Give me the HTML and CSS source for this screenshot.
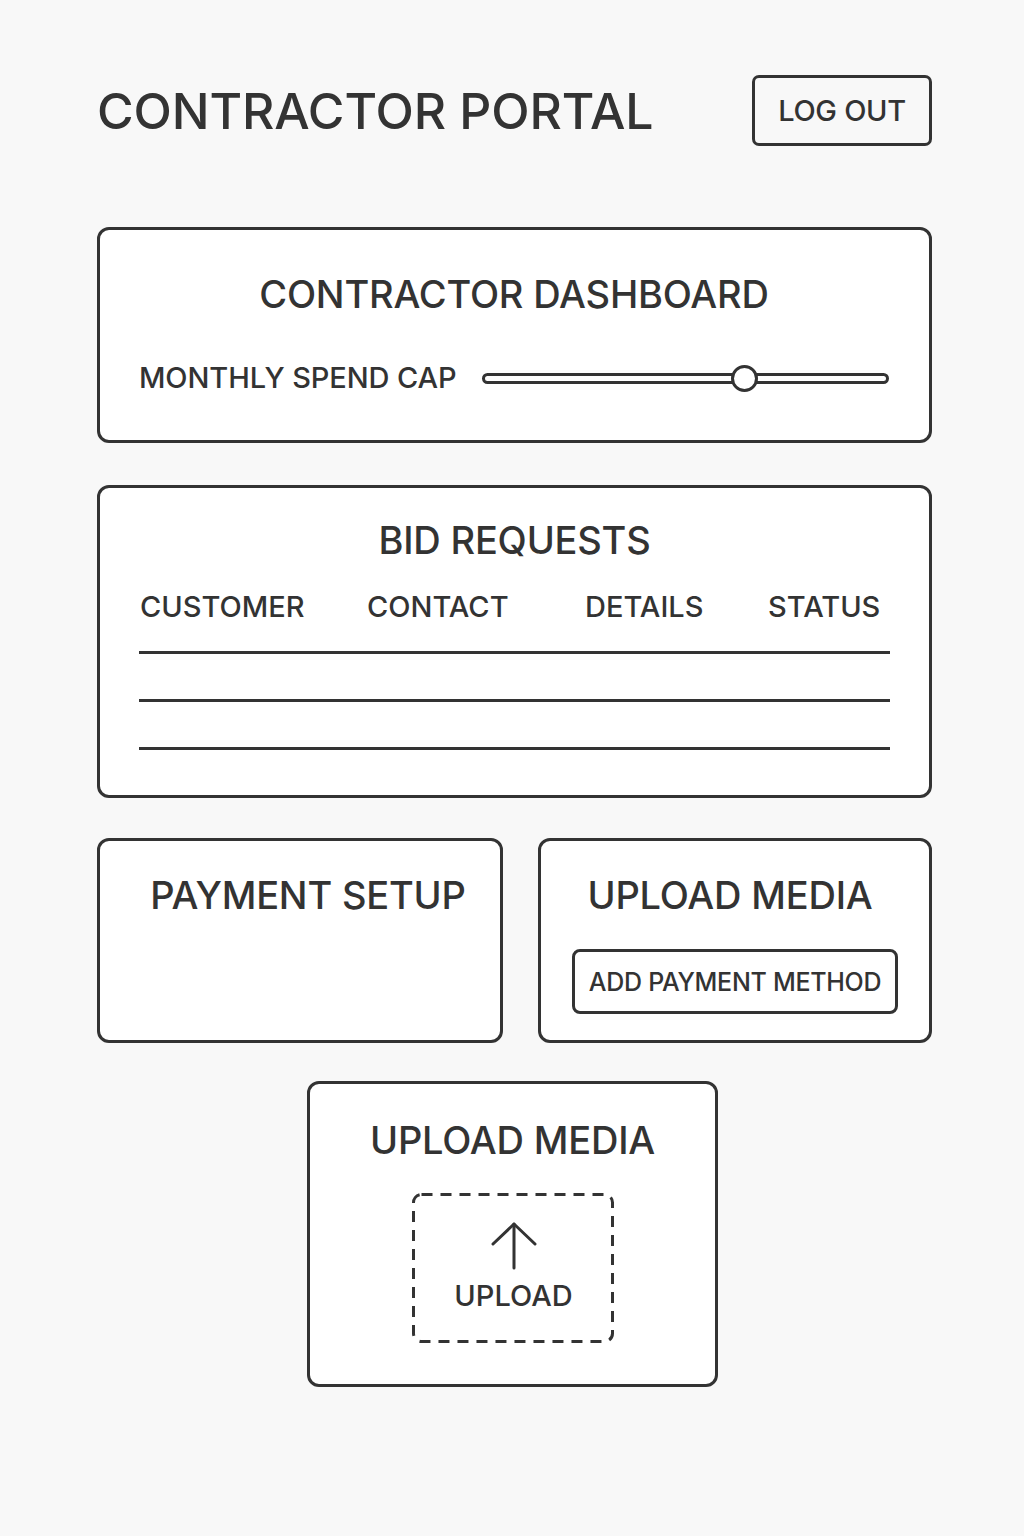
FILE: index.html
```html
<!DOCTYPE html>
<html lang="en">

<head>
  <meta charset="UTF-8" />
  <meta name="viewport" content="width=device-width, initial-scale=1.0" />
  <title>Contractor Portal</title>
  <link rel="stylesheet" href="styles.css">
</head>

<body>
  <div class="page">
    <header class="topbar">
      <h1>CONTRACTOR PORTAL</h1>
      <button class="logout">LOG OUT</button>
    </header>

    <section class="card dashboard">
      <h2>CONTRACTOR DASHBOARD</h2>
      <div class="cap-row">
        <span class="cap-label">MONTHLY SPEND CAP</span>
        <div class="slider">
          <div class="track"></div>
          <div class="thumb" style="left: 64.5%"></div>
        </div>
      </div>
    </section>

    <section class="card bids">
      <h2>BID REQUESTS</h2>
      <div class="bid-head">
        <span>CUSTOMER</span>
        <span>CONTACT</span>
        <span>DETAILS</span>
        <span>STATUS</span>
      </div>
      <div class="bid-row"></div>
      <div class="bid-row"></div>
    </section>

    <div class="split">
      <section class="card payment">
        <h2>PAYMENT SETUP</h2>
      </section>
      <section class="card media-small">
        <h2>UPLOAD MEDIA</h2>
        <button class="outline-btn">ADD PAYMENT METHOD</button>
      </section>
    </div>

    <section class="card upload">
      <h2>UPLOAD MEDIA</h2>
      <div class="dropzone">
        <svg class="dash-border" width="202" height="150" viewBox="0 0 202 150" fill="none">
          <rect x="1.5" y="1.5" width="199" height="147" rx="8" stroke="#333" stroke-width="3" stroke-dasharray="11 8" />
        </svg>
        <svg class="arrow" width="46" height="48" viewBox="0 0 46 48" fill="none" stroke="#333" stroke-width="3" stroke-linecap="round" stroke-linejoin="round">
          <path d="M23 2 L23 46" />
          <path d="M2 22 L23 2 L44 22" />
        </svg>
        <span>UPLOAD</span>
      </div>
    </section>
  </div>
</body>

</html>
```

FILE: styles.css
```css
body {
  margin: 0;
  background-color: #f8f8f8;
  font-family: Inter, "Noto Sans", sans-serif;
  color: #333;
}

.page {
  width: 835px;
  margin-left: 97px;
  padding-top: 75px;
  padding-bottom: 140px;
}

.topbar {
  display: flex;
  justify-content: space-between;
  align-items: center;
  margin-bottom: 81px;
}

.topbar h1 {
  margin: 0;
  font-size: 50px;
  font-weight: 500;
  letter-spacing: -0.1px;
  line-height: 60px;
}

.logout {
  width: 180px;
  height: 71px;
  background-color: transparent;
  border: 3px solid #333;
  border-radius: 7px;
  font-family: inherit;
  font-size: 29px;
  font-weight: 500;
  color: #333;
  letter-spacing: -0.3px;
  padding: 0;
}

.card {
  background-color: #fff;
  border: 3px solid #333;
  border-radius: 12px;
  margin-bottom: 42px;
}

.card h2 {
  margin: 0;
  font-size: 38px;
  font-weight: 500;
  line-height: 44px;
  text-align: center;
  letter-spacing: -0.2px;
}

/* dashboard */
.dashboard {
  padding: 42px 40px 45px 39px;
}

.cap-row {
  display: flex;
  align-items: center;
  gap: 25px;
  margin-top: 45px;
}

.cap-label {
  font-size: 29px;
  line-height: 34px;
  font-weight: 500;
  letter-spacing: -0.1px;
  white-space: nowrap;
}

.slider {
  position: relative;
  flex: 1;
  height: 28px;
  display: flex;
  align-items: center;
}

.track {
  width: 100%;
  height: 11px;
  box-sizing: border-box;
  border: 3px solid #333;
  border-radius: 6px;
  background-color: #fff;
}

.thumb {
  position: absolute;
  top: 1px;
  width: 27px;
  height: 27px;
  box-sizing: border-box;
  margin-left: -13px;
  border: 3px solid #333;
  border-radius: 50%;
  background-color: #fff;
}

/* bid requests */
.bids {
  padding: 30px 39px 45px 39px;
  margin-bottom: 40px;
}

.bid-head {
  display: grid;
  grid-template-columns: 227px 218px 183px auto;
  margin-top: 28px;
  padding: 0 0 27px 1px;
  border-bottom: 3px solid #333;
  font-size: 29px;
  line-height: 34px;
  font-weight: 500;
  letter-spacing: 0;
}

.bid-row {
  height: 45px;
  border-bottom: 3px solid #333;
}

/* payment + media */
.split {
  display: grid;
  grid-template-columns: 406px 394px;
  gap: 35px;
  margin-bottom: 38px;
}

.split .card {
  height: 205px;
  box-sizing: border-box;
  margin-bottom: 0;
}

.payment {
  padding: 32px 0 0 16px;
}

.media-small {
  padding: 32px 31px 0 31px;
}

.media-small h2 {
  padding-right: 10px;
}

.outline-btn {
  display: block;
  width: 100%;
  height: 65px;
  margin-top: 32px;
  background-color: #fff;
  border: 3px solid #333;
  border-radius: 8px;
  font-family: inherit;
  font-size: 25px;
  font-weight: 500;
  color: #333;
  letter-spacing: -0.3px;
  padding: 0;
}

/* upload */
.upload {
  width: 411px;
  box-sizing: border-box;
  margin: 0 0 0 210px;
  padding: 34px 0 41px 0;
}

.dropzone {
  position: relative;
  width: 202px;
  height: 150px;
  box-sizing: border-box;
  margin: 31px auto 0;
  padding: 29px 0 0 2px;
  display: flex;
  flex-direction: column;
  align-items: center;
}

.dash-border {
  position: absolute;
  top: 0;
  left: 0;
}

.arrow {
  display: block;
}

.dropzone span {
  margin-top: 9px;
  font-size: 29px;
  line-height: 34px;
  font-weight: 500;
  letter-spacing: 0;
}
```
